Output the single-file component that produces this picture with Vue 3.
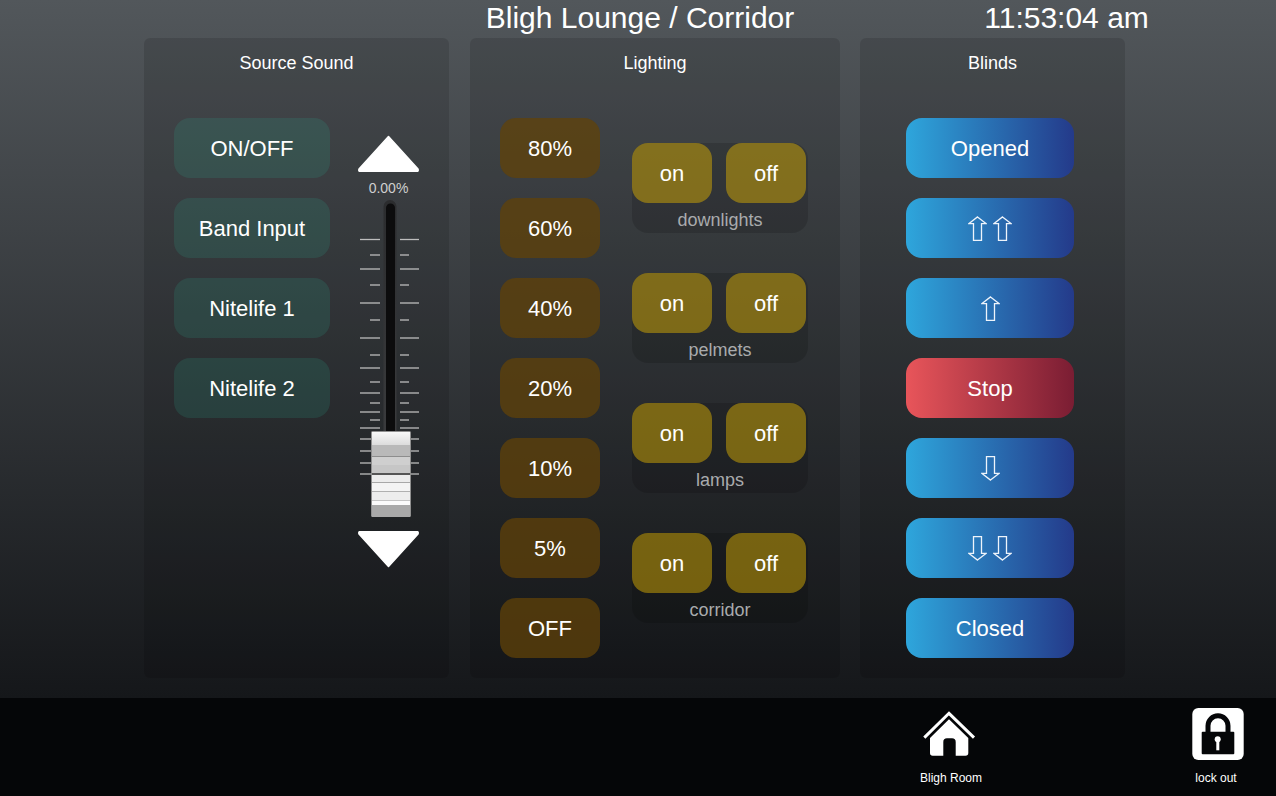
<script setup>
const sources = ['ON/OFF', 'Band Input', 'Nitelife 1', 'Nitelife 2']
const levels = ['80%', '60%', '40%', '20%', '10%', '5%', 'OFF']
const zones = ['downlights', 'pelmets', 'lamps', 'corridor']
const blinds = [
  { id: 'opened', label: 'Opened' },
  { id: 'up2', arrows: 2 },
  { id: 'up1', arrows: 1 },
  { id: 'stop', label: 'Stop', stop: true },
  { id: 'down1', arrows: 1, down: true },
  { id: 'down2', arrows: 2, down: true },
  { id: 'closed', label: 'Closed' }
]

// fader scale marks, y inside the fader svg
const longTicks = [39.5, 69, 103, 138, 168, 193, 212, 228, 239, 251, 263, 274]
const shortTicks = [55, 85, 120, 155, 182, 203, 220]

// bands of the fader cap, top to bottom
const capBands = [
  { y: 445, h: 11, fill: '#b9b9b9' },
  { y: 456, h: 1, fill: '#8d8d8d' },
  { y: 457, h: 8, fill: '#cfcfcf' },
  { y: 465, h: 8, fill: '#c6c6c6' },
  { y: 473, h: 2, fill: '#555555' },
  { y: 475, h: 7, fill: '#ececec' },
  { y: 482, h: 1, fill: '#a8a8a8' },
  { y: 483, h: 8, fill: '#f4f4f4' },
  { y: 491, h: 1, fill: '#b0b0b0' },
  { y: 492, h: 8, fill: '#ededed' },
  { y: 500, h: 1, fill: '#c4c4c4' },
  { y: 501, h: 4, fill: '#fbfbfb' },
  { y: 505, h: 12, fill: '#a9a9a9' }
]
</script>

<template>
  <div class="screen">
    <div class="stage">
      <header class="header">
        <span></span>
        <h1 class="title">Bligh Lounge / Corridor</h1>
        <div class="clock">11:53:04 am</div>
      </header>

      <main class="panels">
        <section class="panel source">
          <h2>Source Sound</h2>
          <div class="source-body">
            <div class="stack">
              <button v-for="s in sources" :key="s" class="btn source-btn">{{ s }}</button>
            </div>
            <div class="fader">
              <svg width="61" height="37" viewBox="0 0 61 37">
                <path d="M30.5 1.500 L60 34 Q60.800 36.500 58.500 36.500 L2.500 36.500 Q0.200 36.500 1 34 Z" fill="#fff" stroke="#fff" stroke-width="1.500" stroke-linejoin="round" />
              </svg>
              <div class="fader-value">0.00%</div>
              <svg class="fader-track" width="61" height="317" viewBox="0 200 61 317">
                <defs>
                  <linearGradient id="cap" x1="0" y1="0" x2="0" y2="1">
                    <stop offset="0" stop-color="#f8f8f8" />
                    <stop offset="1" stop-color="#dcdcdc" />
                  </linearGradient>
                  <linearGradient id="rim" x1="0" y1="0" x2="0" y2="1">
                    <stop offset="0" stop-color="#2b2c2e" />
                    <stop offset="1" stop-color="#3a3b3d" />
                  </linearGradient>
                </defs>
                <g stroke="#bdbdbd" stroke-width="1.300">
                  <g v-for="y in longTicks" :key="y">
                    <line x1="2" :y1="y + 200" x2="22" :y2="y + 200" />
                    <line x1="42" :y1="y + 200" x2="61" :y2="y + 200" />
                  </g>
                  <g v-for="y in shortTicks" :key="y">
                    <line x1="12" :y1="y + 200" x2="22" :y2="y + 200" />
                    <line x1="42" :y1="y + 200" x2="51" :y2="y + 200" />
                  </g>
                </g>
                <rect x="25.500" y="200" width="13" height="240" rx="6.500" fill="url(#rim)" />
                <rect x="28" y="203.500" width="9" height="237" rx="4.500" fill="#0c0c0d" />
                <g transform="translate(-358 0)">
                  <rect x="371" y="431" width="40" height="86" rx="1.500" fill="#8f8f8f" />
                  <rect x="372" y="432" width="38" height="13" fill="url(#cap)" />
                  <rect v-for="b in capBands" :key="b.y" x="372" :y="b.y" width="38" :height="b.h" :fill="b.fill" />
                </g>
              </svg>
              <svg class="fader-down" width="61" height="37" viewBox="0 0 61 37">
                <path d="M30.5 35.500 L60 3 Q60.800 0.500 58.500 0.500 L2.500 0.500 Q0.200 0.500 1 3 Z" fill="#fff" stroke="#fff" stroke-width="1.500" stroke-linejoin="round" />
              </svg>
            </div>
          </div>
        </section>

        <section class="panel lighting">
          <h2>Lighting</h2>
          <div class="lighting-body">
            <div class="stack">
              <button v-for="l in levels" :key="l" class="btn level-btn">{{ l }}</button>
            </div>
            <div class="zones">
              <div v-for="z in zones" :key="z" class="zone">
                <div class="zone-btns">
                  <button class="btn zone-btn">on</button>
                  <button class="btn zone-btn">off</button>
                </div>
                <div class="zone-name">{{ z }}</div>
              </div>
            </div>
          </div>
        </section>

        <section class="panel blinds">
          <h2>Blinds</h2>
          <div class="stack blinds-body">
            <button
              v-for="b in blinds"
              :key="b.id"
              class="btn blind-btn"
              :class="{ stop: b.stop }"
            >
              <template v-if="b.label">{{ b.label }}</template>
              <span v-else class="arrow-row" :class="{ down: b.down }">
                <svg v-for="n in b.arrows" :key="n" width="19" height="25" viewBox="0 0 19 25">
                  <path d="M9.500 0.900 L18 7.600 H13.500 V24.300 H5.500 V7.600 H1 Z" fill="none" stroke="#eef4fb" stroke-width="1.300" />
                </svg>
              </span>
            </button>
          </div>
        </section>
      </main>
    </div>

    <footer class="footer">
      <div class="nav home">
        <svg width="60" height="52" viewBox="0 0 60 52">
          <path d="M3.300 29.600 L28 5.300 L53 29.600" fill="none" stroke="#fff" stroke-width="3" />
          <path fill="#fff" d="M28 11.300 L47.300 30 L47.300 45 Q47.300 47.700 44.500 47.700 L34.700 47.700 L34.700 34 Q34.700 30.300 31 30.300 L26 30.300 Q22.300 30.300 22.300 34 L22.300 47.700 L11.700 47.700 Q9 47.700 9 45 L9 30 Z" />
        </svg>
        <span>Bligh Room</span>
      </div>
      <div class="nav lock">
        <svg width="60" height="52" viewBox="0 0 60 52">
          <rect x="6.300" y="0" width="51.400" height="52" rx="6" fill="#fff" />
          <path d="M22 25 V17.800 A10 10 0 0 1 42 17.800 V25" fill="none" stroke="#050608" stroke-width="5" />
          <rect x="15.700" y="23.700" width="32.600" height="22.600" rx="1" fill="#050608" />
          <circle cx="31.700" cy="31.300" r="3" fill="#fff" />
          <rect x="30.300" y="31.300" width="3" height="11" fill="#fff" />
        </svg>
        <span>lock out</span>
      </div>
    </footer>
  </div>
</template>

<style>
body {
  background: #050608;
}
</style>

<style scoped>
.screen {
  width: 1276px;
  height: 796px;
  font-family: "Liberation Sans", Arial, sans-serif;
  color: #fff;
  display: flex;
  flex-direction: column;
  overflow: hidden;
}
.stage {
  height: 698px;
  background: linear-gradient(to bottom, #52575b 0%, #15171a 100%);
}
.header {
  height: 38px;
  display: grid;
  grid-template-columns: 1fr auto 1fr;
  padding-left: 4px;
  align-items: start;
}
.title {
  margin: 0;
  font-size: 30px;
  font-weight: normal;
  line-height: 36px;
}
.clock {
  font-size: 30px;
  line-height: 36px;
  padding-left: 190px;
  white-space: nowrap;
}
.panels {
  display: flex;
  padding-left: 144px;
  height: 640px;
}
.panel {
  background: rgba(0, 0, 0, 0.12);
  border-radius: 6px;
}
.panel h2 {
  margin: 0;
  height: 80px;
  font-size: 18px;
  font-weight: normal;
  line-height: 51px;
  text-align: center;
}
.source {
  width: 305px;
  margin-right: 21px;
}
.lighting {
  width: 370px;
  margin-right: 20px;
}
.blinds {
  width: 265px;
}
.stack {
  display: flex;
  flex-direction: column;
  gap: 20px;
}
.btn {
  display: block;
  height: 60px;
  border: none;
  padding: 2px 0 0;
  border-radius: 16px;
  color: #fff;
  font-family: inherit;
  font-size: 22px;
}
.source-body {
  display: flex;
  padding-left: 30px;
  gap: 28px;
}
.source-btn {
  width: 156px;
  background: rgba(40, 170, 140, 0.17);
}
.fader {
  width: 61px;
  padding-top: 17px;
}
.fader svg {
  display: block;
}
.fader-value {
  height: 28px;
  font-size: 14px;
  line-height: 32px;
  text-align: center;
  color: #cfcfcf;
  white-space: nowrap;
}
.fader-down {
  margin-top: 14px;
}
.lighting-body {
  display: flex;
  padding-left: 30px;
  gap: 32px;
}
.level-btn {
  width: 100px;
  background: rgba(97, 66, 8, 0.74);
}
.zones {
  display: flex;
  flex-direction: column;
  gap: 40px;
  padding-top: 25px;
}
.zone {
  width: 176px;
  height: 90px;
  background: rgba(0, 0, 0, 0.14);
  border-radius: 16px;
}
.zone-btns {
  display: flex;
  gap: 14px;
}
.zone-btn {
  width: 80px;
  background: rgba(205, 165, 5, 0.52);
}
.zone-name {
  height: 30px;
  font-size: 18px;
  line-height: 34px;
  text-align: center;
  color: #a9abad;
}
.blinds-body {
  padding-left: 46px;
}
.blind-btn {
  width: 168px;
  background: linear-gradient(to right, #2ea6dc, #243a8a);
}
.blind-btn.stop {
  background: linear-gradient(to right, #e8555a, #7a1d33);
}
.arrow-row {
  display: flex;
  justify-content: center;
  gap: 6px;
  margin-top: -2px;
}
.arrow-row.down {
  transform: scaleY(-1);
}
.footer {
  height: 98px;
  background: #050608;
  display: flex;
  justify-content: flex-end;
  padding: 10px 20px 0 0;
  box-sizing: border-box;
}
.nav {
  display: flex;
  flex-direction: column;
  align-items: center;
  font-size: 12px;
  line-height: 14px;
}
.nav svg {
  display: block;
  margin-bottom: 11px;
}
.home {
  width: 120px;
}
.lock {
  width: 80px;
  margin-left: 165px;
}
</style>
